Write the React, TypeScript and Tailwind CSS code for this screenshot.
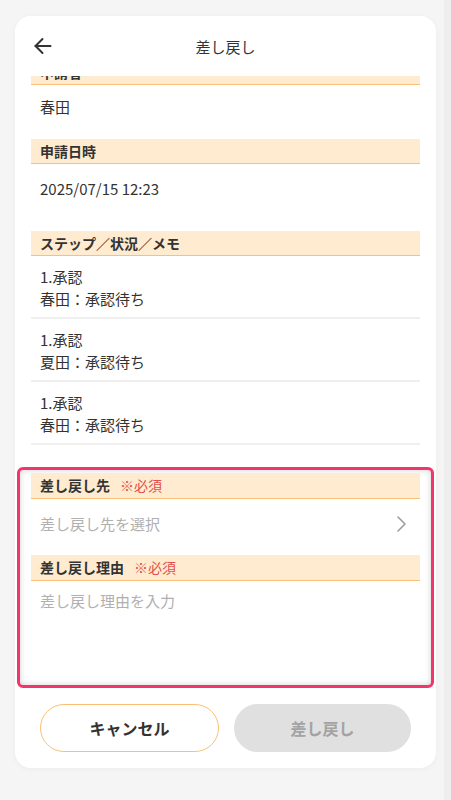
import { useState } from "react";

type Step = { step: string; status: string };

const steps: Step[] = [
  { step: "1.承認", status: "春田：承認待ち" },
  { step: "1.承認", status: "夏田：承認待ち" },
  { step: "1.承認", status: "春田：承認待ち" },
];

function SectionHead({ label, required }: { label: string; required?: boolean }) {
  return (
    <div className="flex items-center h-[26px] pl-[9px] bg-[#feebd0] border-b border-[#f8c176] text-[14px] font-bold text-[#333]">
      {label}
      {required && <span className="ml-[10px] font-normal text-[#e2504c]">※必須</span>}
    </div>
  );
}

export default function App() {
  const [reason, setReason] = useState("");

  return (
    <div className="flex h-[800px] bg-[#f5f5f5] font-['Noto_Sans_CJK_JP','Noto_Sans',sans-serif] text-[#333]">
      <div className="flex-1 pl-[15px] pr-[8px] pt-4">
        <div className="flex flex-col h-[752px] bg-white rounded-2xl shadow-[0_1px_6px_rgba(0,0,0,0.04)] overflow-hidden">
          {/* header */}
          <header className="relative z-10 flex items-center justify-center h-[60px] shrink-0 bg-white">
            <button className="absolute left-[19px] top-[21px] text-[#333]">
              <svg width="18" height="18" viewBox="0 0 18 18" fill="none" stroke="currentColor" strokeWidth="2" strokeLinecap="round" strokeLinejoin="round">
                <path d="M16.5 9H1.5" />
                <path d="M8.5 2 1.5 9l7 7" />
              </svg>
            </button>
            <h1 className="text-[15px] mt-[2px]">差し戻し</h1>
          </header>

          {/* scrolled body */}
          <div className="flex-1 overflow-hidden px-4">
            <div className="-mt-[16px]">
              <div className="flex items-center h-[25px] pl-[9px] bg-[#feebd0] border-b border-[#f8c176] text-[14px] font-bold">
                申請者
              </div>
              <div className="h-[54px] pl-[9px] pt-[11px] text-[15px] leading-[22px]">春田</div>

              <div className="flex items-center h-[25px] pl-[9px] bg-[#feebd0] border-b border-[#f8c176] text-[14px] font-bold">
                申請日時
              </div>
              <div className="h-[67px] pl-[9px] pt-[14px] text-[15px] leading-[22px]">2025/07/15 12:23</div>

              <div className="flex items-center h-[25px] pl-[9px] bg-[#feebd0] border-b border-[#f8c176] text-[14px] font-bold">
                ステップ／状況／メモ
              </div>
              {steps.map((s, i) => (
                <div key={i} className="pl-[9px] pt-[10px] pb-[7px] border-b-2 border-[#efefef] text-[15px] leading-[22px]">
                  <div>{s.step}</div>
                  <div>{s.status}</div>
                </div>
              ))}
            </div>

            {/* required inputs */}
            <div className="-mx-[14px] mt-[22px] px-[11px] pt-[3px] pb-[3px] border-[3px] border-[#f2366b] rounded-md shadow-[inset_0_0_6px_rgba(0,0,0,0.18)]">
              <SectionHead label="差し戻し先" required />
              <button className="flex items-start justify-between w-full h-[56px] pl-[9px] pr-[8px] pt-[14px] text-[15px] leading-[22px] text-[#b0b0b0]">
                <span>差し戻し先を選択</span>
                <svg width="22" height="22" viewBox="0 0 22 22" fill="none" stroke="#9a9a9a" strokeWidth="1.5" strokeLinecap="round" strokeLinejoin="round">
                  <path d="M8 4l7 7-7 7" />
                </svg>
              </button>
              <SectionHead label="差し戻し理由" required />
              <textarea
                value={reason}
                onChange={(e) => setReason(e.target.value)}
                placeholder="差し戻し理由を入力"
                className="block w-full h-[101px] pl-[9px] pt-[9px] text-[15px] leading-[22px] resize-none outline-none placeholder:text-[#b0b0b0]"
              />
            </div>
          </div>

          {/* footer */}
          <div className="flex gap-[15px] h-[80px] shrink-0 px-[25px] pt-4">
            <button className="flex-1 h-[48px] rounded-full border border-[#f8c176] bg-white text-[16px] font-bold text-[#333]">
              キャンセル
            </button>
            <button disabled className="flex-1 h-[48px] rounded-full bg-[#e0e0e0] text-[16px] font-bold text-[#a3a3a3]">
              差し戻し
            </button>
          </div>
        </div>
      </div>
      <div className="w-[7px] bg-[#eeeeee]" />
    </div>
  );
}
